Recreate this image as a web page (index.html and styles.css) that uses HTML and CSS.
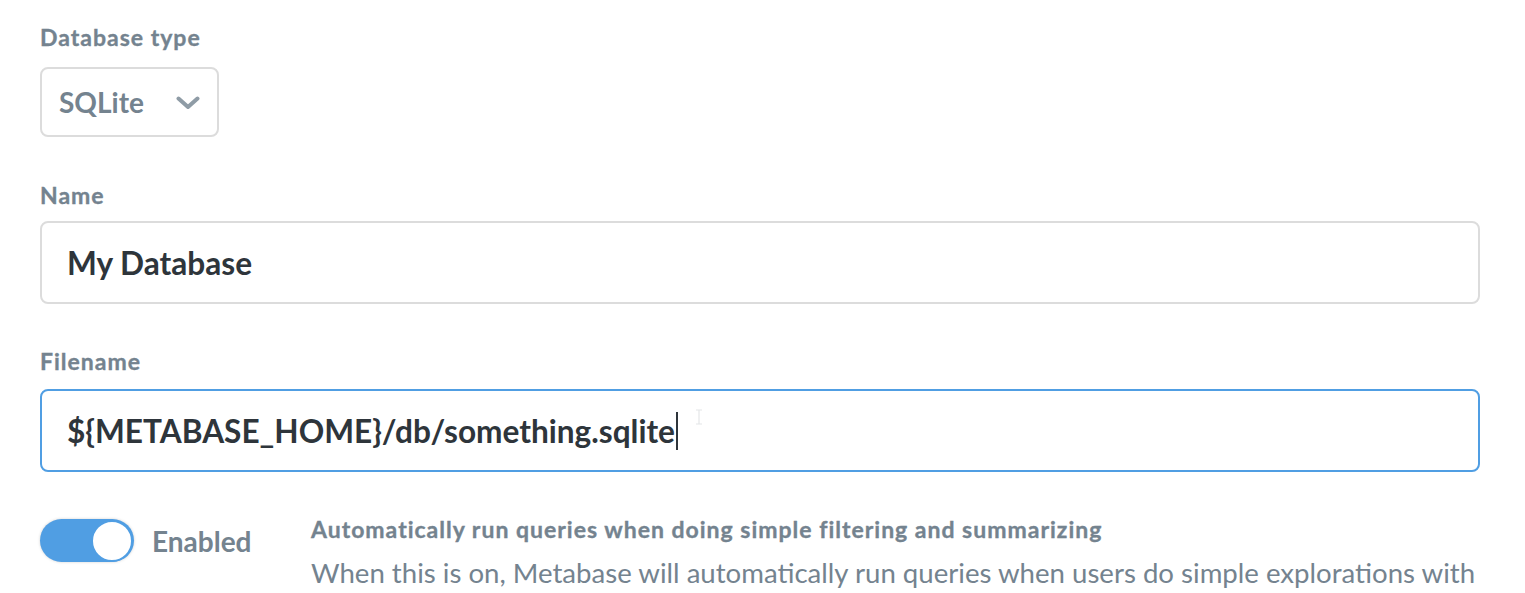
FILE: index.html
```html
<!DOCTYPE html>
<html>
<head>
<meta charset="utf-8">
<link rel="stylesheet" href="styles.css">
</head>
<body>
<div class="form">
  <div class="field field-type">
    <div class="label label-type">Database type</div>
    <div class="select">
      <span class="select-text">SQLite</span>
      <svg class="chevron" width="24" height="14" viewBox="0 0 24 14"><polyline points="2.5,2.5 12,11 21.5,2.5" fill="none" stroke="#8f9ca6" stroke-width="4" stroke-linecap="round" stroke-linejoin="round"/></svg>
    </div>
  </div>
  <div class="field field-name">
    <div class="label label-name">Name</div>
    <div class="input">My Database</div>
  </div>
  <div class="field field-file">
    <div class="label label-file">Filename</div>
    <div class="input input-focus"><span>${METABASE_HOME}/db/something.sqlite</span><span class="caret"></span>
      <svg class="ibeam" width="8" height="16" viewBox="0 0 8 16"><path d="M1 1h6M4 1v14M1 15h6" fill="none" stroke="#e4e6e8" stroke-width="1.2"/></svg>
    </div>
  </div>
  <div class="setting">
    <div class="toggle-group">
      <div class="toggle"><div class="knob"></div></div>
      <span class="toggle-label">Enabled</span>
    </div>
    <div class="setting-text">
      <div class="setting-title">Automatically run queries when doing simple filtering and summarizing</div>
      <div class="setting-desc">When this is on, Metabase will automatically run queries when users do simple explorations with the Summarize and Filter buttons when viewing a table or chart. You can turn this off if querying this database is slow. This setting doesn’t affect drill-throughs or SQL queries.</div>
    </div>
  </div>
</div>
</body>
</html>
```

FILE: styles.css
```css
html, body {
  margin: 0;
  padding: 0;
  background: #ffffff;
}
body {
  font-family: Lato, "Noto Sans", sans-serif;
  overflow: hidden;
}
.form {
  padding: 25px 45px 0 40px;
}
.label {
  font-weight: 700;
  font-size: 23px;
  line-height: 25px;
  letter-spacing: 1px;
  -webkit-text-stroke: 0.35px #74838f;
  color: #74838f;
}
.label-type { margin-bottom: 17px; }
.label-name { margin-bottom: 13px; }
.label-file { margin-bottom: 15px; }
.field-type { margin-bottom: 46px; }
.field-name { margin-bottom: 45px; }
.field-file { margin-bottom: 45px; }

.select {
  box-sizing: border-box;
  width: 179px;
  height: 70px;
  border: 2px solid #dcdcdc;
  border-radius: 8px;
  display: flex;
  align-items: center;
  justify-content: space-between;
  padding: 0 17px 0 17px;
}
.select-text {
  font-weight: 700;
  font-size: 28px;
  color: #74838f;
}
.chevron { display: block; margin-top: 2px; }

.input {
  box-sizing: border-box;
  height: 83px;
  border: 2px solid #dcdcdc;
  border-radius: 8px;
  display: flex;
  align-items: center;
  padding-left: 25px;
  font-weight: 700;
  font-size: 31.6px;
  color: #2e353b;
  position: relative;
}
.input-focus {
  border-color: #509ee3;
}
.caret {
  display: inline-block;
  width: 2px;
  height: 38px;
  background: #2e353b;
  margin-left: 1px;
}
.ibeam {
  position: absolute;
  left: 653px;
  top: 18px;
}

.setting {
  display: flex;
  align-items: flex-start;
}
.toggle-group {
  width: 271px;
  flex-shrink: 0;
  display: flex;
  align-items: center;
  margin-top: 2px;
}
.toggle {
  box-sizing: border-box;
  width: 94px;
  height: 43px;
  border-radius: 22px;
  background: #509ee3;
  box-shadow: 0 0 3px rgba(0,0,0,0.18);
  display: flex;
  justify-content: flex-end;
  align-items: center;
  padding-right: 1px;
}
.knob {
  box-sizing: border-box;
  width: 42px;
  height: 42px;
  border-radius: 50%;
  background: #fff;
  border: 2px solid #509ee3;
}
.toggle-label {
  margin-left: 18px;
  font-weight: 700;
  font-size: 28px;
  line-height: 34px;
  color: #74838f;
}
.setting-text {
  flex: 1;
}
.setting-title {
  font-weight: 700;
  font-size: 23px;
  line-height: 25px;
  letter-spacing: 1px;
  -webkit-text-stroke: 0.35px #74838f;
  color: #74838f;
  margin-bottom: 10px;
}
.setting-desc {
  font-size: 27.6px;
  line-height: 42px;
  color: #74838f;
}
```
